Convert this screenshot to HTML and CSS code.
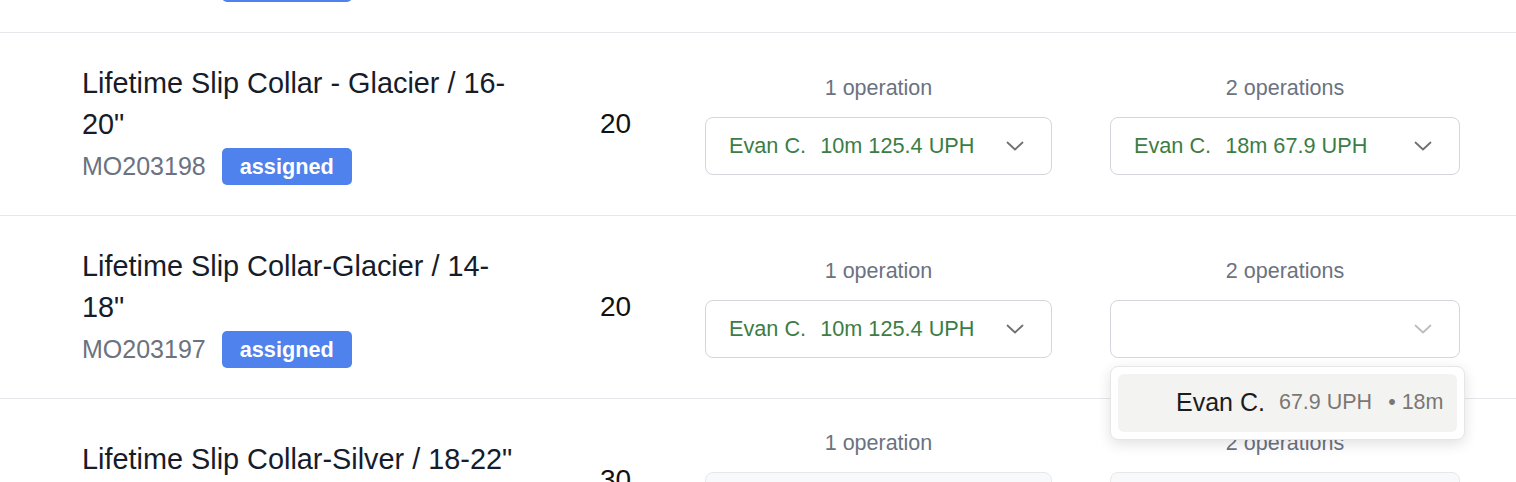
FILE: index.html
```html
<!DOCTYPE html>
<html lang="en">
<head>
<meta charset="utf-8">
<title>Manufacturing orders</title>
<link rel="stylesheet" href="styles.css">
</head>
<body>
<div class="list">
  <div class="row">
    <div class="item">
      <div class="title">Lifetime Slip Collar - Glacier / 18-22"</div>
      <div class="meta"><span class="mo">MO203199</span><span class="badge badge-blue">assigned</span></div>
    </div>
    <div class="qty">20</div>
    <div class="ops">
      <div class="op op-first">
        <div class="op-label">1 operation</div>
        <div class="select"><span class="sel-name">Evan C.</span><span class="sel-val">10m 125.4 UPH</span><svg class="chev" viewBox="0 0 18 10"><path d="M1.5 1.5 L9 8.5 L16.5 1.5"/></svg></div>
      </div>
      <div class="op">
        <div class="op-label">2 operations</div>
        <div class="select"><span class="sel-name">Evan C.</span><span class="sel-val">18m 67.9 UPH</span><svg class="chev" viewBox="0 0 18 10"><path d="M1.5 1.5 L9 8.5 L16.5 1.5"/></svg></div>
      </div>
    </div>
  </div>

  <div class="row">
    <div class="item">
      <div class="title">Lifetime Slip Collar - Glacier / 16-20"</div>
      <div class="meta"><span class="mo">MO203198</span><span class="badge badge-blue">assigned</span></div>
    </div>
    <div class="qty">20</div>
    <div class="ops">
      <div class="op op-first">
        <div class="op-label">1 operation</div>
        <div class="select"><span class="sel-name">Evan C.</span><span class="sel-val">10m 125.4 UPH</span><svg class="chev" viewBox="0 0 18 10"><path d="M1.5 1.5 L9 8.5 L16.5 1.5"/></svg></div>
      </div>
      <div class="op">
        <div class="op-label">2 operations</div>
        <div class="select"><span class="sel-name">Evan C.</span><span class="sel-val">18m 67.9 UPH</span><svg class="chev" viewBox="0 0 18 10"><path d="M1.5 1.5 L9 8.5 L16.5 1.5"/></svg></div>
      </div>
    </div>
  </div>

  <div class="row">
    <div class="item">
      <div class="title">Lifetime Slip Collar-Glacier / 14-18"</div>
      <div class="meta"><span class="mo">MO203197</span><span class="badge badge-blue">assigned</span></div>
    </div>
    <div class="qty">20</div>
    <div class="ops">
      <div class="op op-first">
        <div class="op-label">1 operation</div>
        <div class="select"><span class="sel-name">Evan C.</span><span class="sel-val">10m 125.4 UPH</span><svg class="chev" viewBox="0 0 18 10"><path d="M1.5 1.5 L9 8.5 L16.5 1.5"/></svg></div>
      </div>
      <div class="op">
        <div class="op-label">2 operations</div>
        <div class="select-wrap">
          <div class="select select-empty"><svg class="chev chev-light" viewBox="0 0 18 10"><path d="M1.5 1.5 L9 8.5 L16.5 1.5"/></svg></div>
          <div class="menu">
            <div class="option"><span class="opt-name">Evan C.</span><span class="opt-uph">67.9 UPH</span><span class="opt-time">• 18m</span></div>
          </div>
        </div>
      </div>
    </div>
  </div>

  <div class="row">
    <div class="item">
      <div class="title">Lifetime Slip Collar-Silver / 18-22"</div>
      <div class="meta"><span class="mo">MO203196</span><span class="badge badge-green">waiting</span></div>
    </div>
    <div class="qty">30</div>
    <div class="ops">
      <div class="op op-first">
        <div class="op-label">1 operation</div>
        <div class="select select-muted"></div>
      </div>
      <div class="op">
        <div class="op-label">2 operations</div>
        <div class="select select-muted"></div>
      </div>
    </div>
  </div>
</div>
</body>
</html>
```

FILE: styles.css
```css
* {
  box-sizing: border-box;
}

html, body {
  margin: 0;
  padding: 0;
  background: #ffffff;
  font-family: "Liberation Sans", Arial, Helvetica, sans-serif;
  color: #161c2a;
}

body {
  height: 482px;
  overflow: hidden;
}

.list {
  margin-top: -150px;
}

.row {
  display: flex;
  align-items: center;
  padding: 30px 56px 30px 82px;
  border-bottom: 1px solid #e5e7eb;
}

.item {
  width: 440px;
  flex: 0 0 440px;
}

.title {
  max-width: 438px;
  font-size: 28.85px;
  line-height: 41px;
  color: #161c2a;
}

.meta {
  display: flex;
  align-items: center;
  gap: 16px;
  margin-top: 3px;
}

.mo {
  font-size: 25px;
  color: #6b7280;
  line-height: 37px;
}

.badge {
  display: inline-flex;
  align-items: center;
  height: 37px;
  padding: 0 18px;
  border-radius: 5px;
  color: #ffffff;
  font-weight: 700;
  font-size: 21.7px;
}

.badge-blue {
  background: #4f82ec;
}

.badge-green {
  background: #5cb85c;
}

.qty {
  flex: 0 0 183px;
  text-align: center;
  padding-left: 4px;
  font-size: 28px;
  color: #111111;
}

.ops {
  flex: 1;
  display: flex;
  gap: 58px;
}

.op {
  flex: 1;
  min-width: 0;
}

.op-first {
  flex: 0 0 347px;
}

.op-label {
  text-align: center;
  font-size: 21.5px;
  line-height: 28px;
  color: #6b7280;
  margin-bottom: 15px;
}

.select-wrap {
  position: relative;
}

.select {
  position: relative;
  display: flex;
  align-items: center;
  height: 58px;
  padding: 0 23px;
  border: 1px solid #d4d6db;
  border-radius: 8px;
  background: #ffffff;
  font-size: 21.7px;
  color: #3b7d45;
}

.sel-name {
  margin-right: 14px;
}

.chev {
  position: absolute;
  right: 27px;
  top: 23px;
  width: 18px;
  height: 10px;
}

.chev path {
  fill: none;
  stroke: #707070;
  stroke-width: 1.8;
  stroke-linecap: round;
  stroke-linejoin: round;
}

.chev-light path {
  stroke: #bdbdbd;
}

.select-muted {
  background: #f8f9fb;
  border-color: #e7e8ec;
}

.menu {
  position: absolute;
  top: calc(100% + 8px);
  left: 0;
  right: -5px;
  padding: 7px;
  background: #ffffff;
  border: 1px solid #e6e6e6;
  border-radius: 8px;
  box-shadow: 0 4px 14px rgba(0, 0, 0, 0.12);
  z-index: 10;
}

.option {
  display: flex;
  align-items: center;
  height: 58px;
  padding-left: 58px;
  border-radius: 6px;
  background: #f3f3f2;
}

.opt-name {
  font-size: 25px;
  color: #1c1c1c;
  margin-right: 14px;
}

.opt-uph {
  font-size: 21.5px;
  color: #7b7772;
  margin-right: 16px;
}

.opt-time {
  font-size: 21.5px;
  color: #7b7772;
}
```
